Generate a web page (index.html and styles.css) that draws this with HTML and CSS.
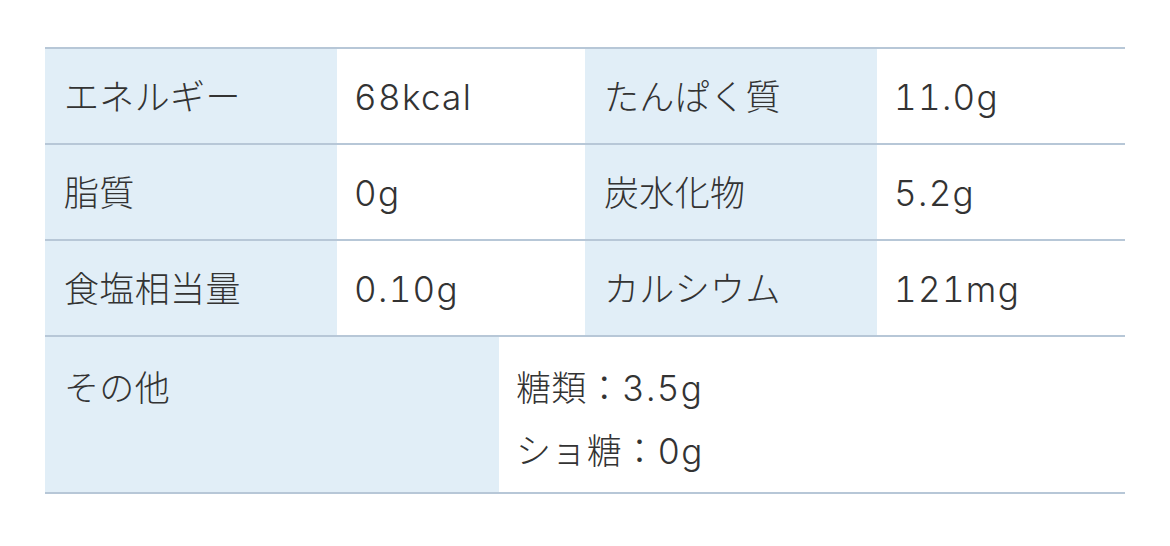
FILE: index.html
```html
<!DOCTYPE html>
<html lang="ja">
<head>
<meta charset="utf-8">
<link rel="stylesheet" href="styles.css">
</head>
<body>
<div class="nutrition">
  <div class="row four">
    <div class="cell label">エネルギー</div>
    <div class="cell value"><span class="num">68kcal</span></div>
    <div class="cell label">たんぱく質</div>
    <div class="cell value"><span class="num">11.0g</span></div>
  </div>
  <div class="row four">
    <div class="cell label">脂質</div>
    <div class="cell value"><span class="num">0g</span></div>
    <div class="cell label">炭水化物</div>
    <div class="cell value"><span class="num">5.2g</span></div>
  </div>
  <div class="row four">
    <div class="cell label">食塩相当量</div>
    <div class="cell value"><span class="num">0.10g</span></div>
    <div class="cell label">カルシウム</div>
    <div class="cell value"><span class="num">121mg</span></div>
  </div>
  <div class="row two">
    <div class="cell label tall">その他</div>
    <div class="cell value tall">糖類：<span class="num">3.5g</span><br>ショ糖：<span class="num">0g</span></div>
  </div>
</div>
</body>
</html>
```
FILE: styles.css
```css
html, body {
  margin: 0;
  padding: 0;
  background: #ffffff;
}
body {
  padding: 47px 45px;
  font-family: "Inter", "Noto Sans CJK JP", "Noto Sans", sans-serif;
  font-weight: 300;
  color: #333333;
}
.nutrition {
  width: 1080px;
  border-top: 2px solid #b7c7d7;
}
.row {
  display: grid;
  border-bottom: 2px solid #b7c7d7;
}
.row.four {
  grid-template-columns: 292px 248px 292px 248px;
}
.row.two {
  grid-template-columns: 454px 1fr;
}
.cell {
  font-size: 35px;
  line-height: 63px;
  padding: 17px 18px 14px 19px;
  letter-spacing: 0.01em;
}
.label {
  background: #e1eef7;
}
.value {
  background: #ffffff;
  padding-left: 17px;
}
.num {
  font-feature-settings: "tnum" 1;
  letter-spacing: 1.3px;
}
.cell.tall {
  padding-top: 20px;
  padding-bottom: 9px;
}
.value.tall {
  padding-left: 17px;
}
```
